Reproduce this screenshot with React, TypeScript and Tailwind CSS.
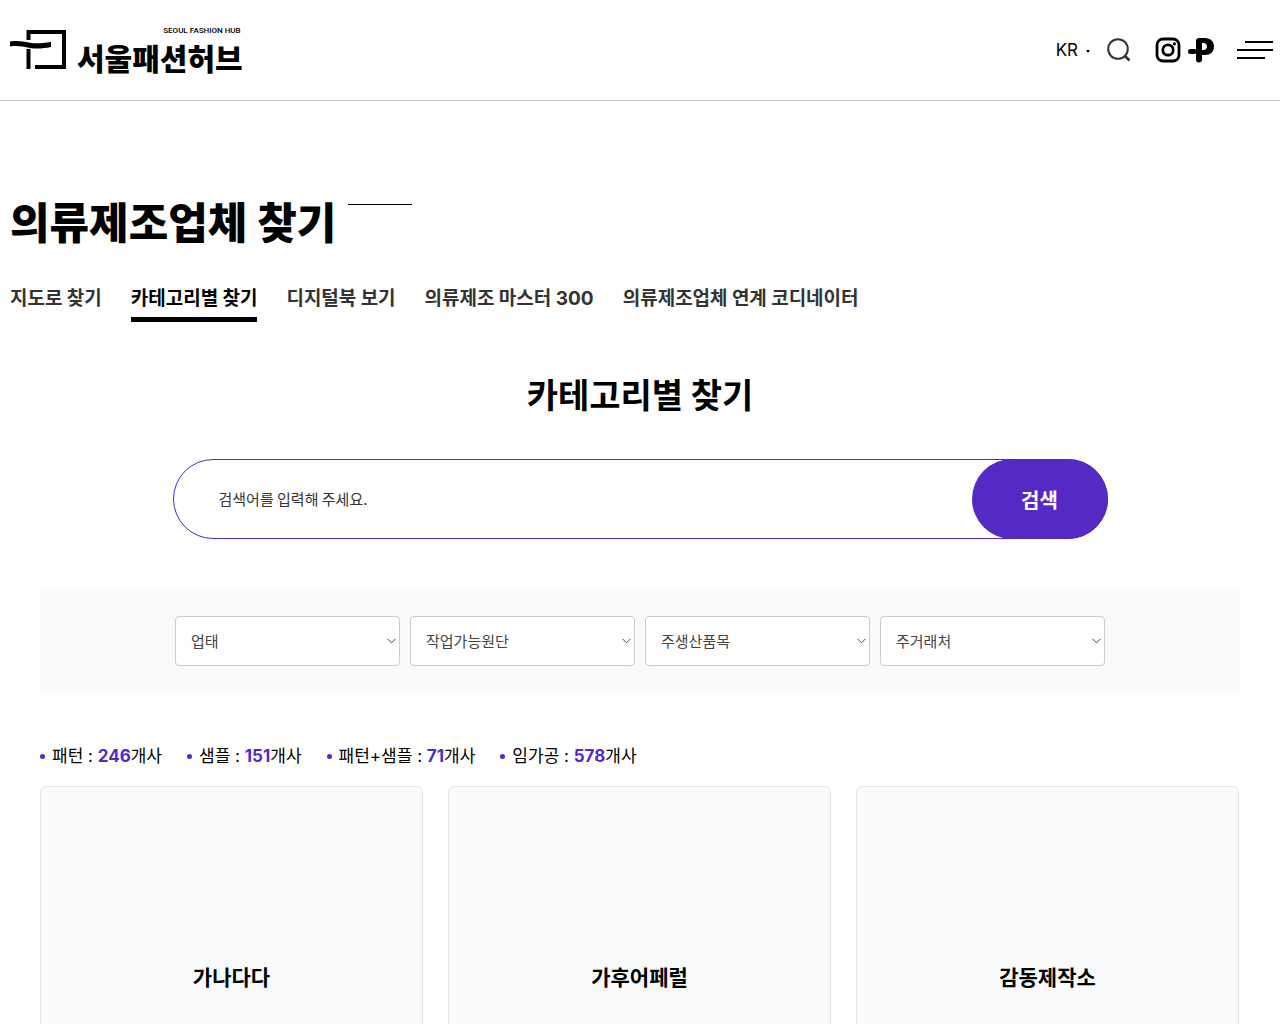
import React from "react";

const tabs: { name: string; number?: string }[] = [
  { name: "지도로 찾기" },
  { name: "카테고리별 찾기" },
  { name: "디지털북 보기" },
  { name: "의류제조 마스터", number: "300" },
  { name: "의류제조업체 연계 코디네이터" },
];
const filters = ["업태", "작업가능원단", "주생산품목", "주거래처"];
const stats = [
  { label: "패턴", count: 246 },
  { label: "샘플", count: 151 },
  { label: "패턴+샘플", count: 71 },
  { label: "임가공", count: 578 },
];
const companies = ["가나다다", "가후어페럴", "감동제작소"];

function Header() {
  return (
    <header className="flex h-[101px] items-center justify-between border-b border-[#ccc] pl-2.5 pr-[7px]">
      <a href="#" aria-label="서울패션허브" className="flex items-center gap-2.5">
        <svg width="57" height="40" viewBox="0 0 57 40" aria-hidden="true">
          <path d="M18.5 10V2H54V37H25" fill="none" stroke="#000" strokeWidth="4" />
          <path d="M18.5 19V39" stroke="#000" strokeWidth="4" />
          <path d="M0 11.5C8 10.500 13 11.500 20 12.800C27 14 33 13 41 12V17C33 18.500 27 19 20 18C13 16.500 7 15.500 0 16.500Z" />
        </svg>
        <span className="flex flex-col items-end pt-1.5">
          <span className="pr-0.5 font-['Roboto',sans-serif] text-[8px] font-medium leading-[8px]">SEOUL FASHION HUB</span>
          <span className="whitespace-nowrap text-[30px] font-black leading-[44px]">서울패션허브</span>
        </span>
      </a>
      <div className="flex items-center">
        <button type="button" className="flex items-center gap-2 pt-0.5 font-['Inter',sans-serif] text-[17px]">
          KR
          <svg width="4" height="3" viewBox="0 0 4 3" aria-hidden="true"><path d="M0 0H4L2 3Z" /></svg>
        </button>
        <button type="button" aria-label="검색 열기" className="ml-[17px]">
          <svg width="24" height="24" viewBox="0 0 24 24" fill="none" stroke="#333" strokeWidth="2" aria-hidden="true">
            <circle cx="11" cy="11" r="9.8" />
            <path d="M17.5 17.5L22.5 22.5" strokeWidth="2.6" />
          </svg>
        </button>
        <a href="#" aria-label="Instagram" className="ml-6">
          <svg width="26" height="26" viewBox="0 0 26 26" fill="none" stroke="#000" strokeWidth="2.8" aria-hidden="true">
            <rect x="2" y="2" width="22" height="22" rx="6" />
            <circle cx="13" cy="13" r="5.2" />
            <circle cx="19.4" cy="6.8" r="1.6" fill="#000" stroke="none" />
          </svg>
        </a>
        <a href="#" aria-label="Post" className="ml-1.5">
          <svg width="28" height="26" viewBox="0 0 28 26" aria-hidden="true">
            <path
              fillRule="evenodd"
              d="M9 4Q9 1 12 1H18C23.500 1 27 4.500 27 9.500C27 14.500 23.500 18 18 18H15V22.500Q15 25.500 12 25.500Q9 25.500 9 22.500ZM15 6V13H17C19 12.500 20 11.500 20 9.500C20 7.500 19 6.500 17 6Z"
            />
            <path d="M3.500 12H8L9.500 13V16L8 17H3.500Q1 17 1 14.500Q1 12 3.500 12Z" />
          </svg>
        </a>
        <button type="button" aria-label="전체 메뉴" className="ml-[22px]">
          <svg width="36" height="18" viewBox="0 0 36 18" stroke="#000" strokeWidth="2" aria-hidden="true">
            <path d="M8 1H36M0 9H36M0 17H28" />
          </svg>
        </button>
      </div>
    </header>
  );
}

function FilterSelect({ label }: { label: string }) {
  return (
    <div className="relative flex-1">
      <select aria-label={label} className="h-[50px] w-full appearance-none rounded border border-[#ccc] bg-white px-[15px] text-[15px] text-[#444]">
        <option>{label}</option>
      </select>
      <svg className="pointer-events-none absolute right-1 top-[22px]" width="9" height="6" viewBox="0 0 9 6" fill="none" stroke="#444" aria-hidden="true">
        <path d="M0.5 0.8L4.5 4.8L8.5 0.8" />
      </svg>
    </div>
  );
}

export default function App() {
  return (
    <div className="h-screen overflow-hidden bg-white font-['Noto_Sans_CJK_KR',sans-serif] text-black">
      <Header />
      <main>
        <div className="px-2.5 pt-[89px]">
          <div className="flex items-start gap-3">
            <h1 className="text-[43px] font-black leading-[60px]">의류제조업체 찾기</h1>
            <span className="mt-3.5 h-px w-16 bg-black" />
          </div>
          <nav aria-label="의류제조업체 찾기" className="mt-8 flex gap-[29px]">
            {tabs.map((tab, i) => (
              <a
                key={tab.name}
                href="#"
                aria-current={i === 1 ? "page" : undefined}
                className={
                  i === 1
                    ? "border-b-[5px] border-black pb-[3px] text-[19px] font-bold leading-[30px]"
                    : "border-b-[5px] border-transparent pb-[3px] text-[19px] font-bold leading-[30px] text-[#333]"
                }
              >
                {tab.name}
                {tab.number && <span className="font-['Inter',sans-serif]"> {tab.number}</span>}
              </a>
            ))}
          </nav>
        </div>

        <section className="mx-auto max-w-[1280px] px-10">
          <h2 className="mt-[47px] text-center text-[34px] font-bold leading-[50px]">카테고리별 찾기</h2>

          <form className="mx-auto mt-10 flex h-20 max-w-[935px] rounded-full border border-[#5429c6]" onSubmit={(e) => e.preventDefault()}>
            <input
              type="search"
              aria-label="검색어"
              placeholder="검색어를 입력해 주세요."
              className="min-w-0 flex-1 rounded-full bg-transparent pl-[45px] text-[15px] outline-none placeholder:text-[#333]"
            />
            <button type="submit" className="-my-px -mr-px w-[136px] rounded-full bg-[#5429c6] pt-0.5 text-xl font-bold text-white">검색</button>
          </form>

          <div className="mt-[50px] bg-[#f8fafc] px-5 py-[27px]">
            <div className="mx-auto flex max-w-[930px] gap-2.5">
              {filters.map((f) => <FilterSelect key={f} label={f} />)}
            </div>
          </div>

          <ul className="mt-[50px] flex gap-[25px] font-['Inter','Noto_Sans_CJK_KR',sans-serif] text-[17px] leading-[26px]">
            {stats.map((s) => (
              <li key={s.label} className="flex items-center">
                <span className="mr-[7px] size-[5px] rounded-full bg-[#5429c6]" />
                <span>
                  {s.label} : <strong className="font-bold text-[#5429c6]">{s.count}</strong>개사
                </span>
              </li>
            ))}
          </ul>

          <div className="mt-[17px] grid grid-cols-3 gap-[25px] pr-px">
            {companies.map((name) => (
              <a key={name} href="#" className="block h-[380px] rounded-md border border-[#e5e5e5] bg-[#f8fafb] pt-[174px] text-center">
                <h3 className="text-[21px] font-bold leading-[30px]">{name}</h3>
              </a>
            ))}
          </div>
        </section>
      </main>
    </div>
  );
}
